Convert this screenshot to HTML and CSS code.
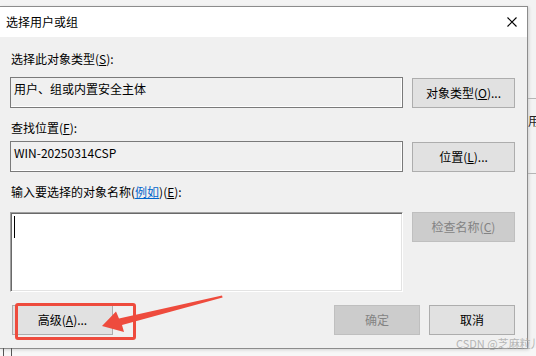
FILE: index.html
```html
<!DOCTYPE html>
<html>
<head>
  <meta charset="utf-8">
  <title>选择用户或组</title>
  <link rel="stylesheet" href="styles.css">
</head>
<body>
  <div class="desk">
    <div class="dialog">
      <div class="titlebar">
        <span class="title">选择用户或组</span>
        <svg class="close" width="10" height="10" viewBox="0 0 10 10">
          <path d="M0.5 0.5 L9.5 9.5 M9.5 0.5 L0.5 9.5" stroke="#000" stroke-width="1.1" fill="none"/>
        </svg>
      </div>
      <div class="content">
        <div class="lbl lbl1">选择此对象类型(<u>S</u>):</div>
        <div class="row row1">
          <div class="field">用户、组或内置安全主体</div>
          <button class="btn">对象类型(<u>O</u>)...</button>
        </div>
        <div class="lbl lbl2">查找位置(<u>F</u>):</div>
        <div class="row row2">
          <div class="field">WIN-20250314CSP</div>
          <button class="btn">位置(<u>L</u>)...</button>
        </div>
        <div class="lbl lbl3">输入要选择的对象名称(<a class="link" href="#">例如</a>)(<u>E</u>):</div>
        <div class="row row3">
          <div class="namebox"><span class="caret"></span></div>
          <button class="btn off">检查名称(<u>C</u>)</button>
        </div>
        <div class="footer">
          <button class="btn adv">高级(<u>A</u>)...</button>
          <div class="spacer"></div>
          <button class="btn off small">确定</button>
          <button class="btn small">取消</button>
        </div>
      </div>
    </div>
    <div class="behind">
      <div class="behind-line"></div>
      <div class="behind-text">用户</div>
      <div class="behind-line low"></div>
    </div>
  </div>
  <div class="under"><span class="col a"></span><span class="col b"></span></div>

  <!-- annotation drawn over the screenshot -->
  <div class="mark"></div>
  <svg class="arrow" width="536" height="356" viewBox="0 0 536 356">
    <polygon points="102,326 116,311.5 119,318.5 222,295.5 222.6,297.6 122,325 124,332" fill="#ee4b3d"/>
  </svg>
  <div class="watermark">CSDN @芝麻粒儿</div>
</body>
</html>
```

FILE: styles.css
```css
* {
  box-sizing: border-box;
}

body {
  margin: 0;
  width: 536px;
  height: 356px;
  overflow: hidden;
  background-color: #f3f3f3;
  font-family: "Noto Sans CJK SC", "Noto Sans", sans-serif;
  font-size: 12px;
  color: #000;
  position: relative;
}

.desk {
  display: flex;
  align-items: flex-start;
  padding-top: 6px;
  height: 348px;
}

.dialog {
  width: 528px;
  flex-shrink: 0;
  border-top: 1px solid #8c8c8c;
  border-right: 1px solid #8c8c8c;
  border-bottom: 1px solid #8c8c8c;
  box-shadow: 1px 1px 3px rgba(0, 0, 0, 0.15);
}

.titlebar {
  height: 30px;
  background-color: #fff;
  display: flex;
  align-items: center;
  justify-content: space-between;
  padding-left: 6px;
  padding-right: 10px;
}

.title {
  line-height: 16px;
}

.content {
  background-color: #f0f0f0;
  padding: 14px 12px 13px 10px;
}

.lbl {
  line-height: 16px;
  height: 16px;
  padding-left: 1px;
}

.lbl2,
.lbl3 {
  margin-top: 12px;
}

.link {
  color: #0066cc;
}

.row {
  display: grid;
  grid-template-columns: 393px 103px;
  column-gap: 9px;
  align-items: center;
}

.row1 {
  margin-top: 10px;
}

.row2 {
  margin-top: 5px;
}

.row3 {
  margin-top: 12px;
  align-items: start;
}

.field {
  height: 31px;
  border: 1px solid #7a7a7a;
  box-shadow: inset -1px -1px 0 #fff;
  padding: 0 3px;
  line-height: 22px;
}

.namebox {
  height: 80px;
  background-color: #fff;
  border-top: 1px solid #a0a0a0;
  border-left: 1px solid #a0a0a0;
  border-right: 1px solid #fff;
  border-bottom: 1px solid #fff;
  box-shadow: inset 1px 1px 0 #696969, inset -1px -1px 0 #e3e3e3;
  padding: 2px 0 0 2px;
}

.caret {
  display: block;
  width: 1px;
  height: 22px;
  margin-top: 1px;
  margin-left: 1px;
  background-color: #000;
}

.btn {
  height: 30px;
  font-family: inherit;
  font-size: 12px;
  color: #000;
  background-color: #e1e1e1;
  border: 1px solid #adadad;
  padding: 0;
  line-height: 16px;
}

.btn.off {
  background-color: #cccccc;
  border-color: #bfbfbf;
  color: #838383;
}

.footer {
  display: flex;
  gap: 9px;
  margin-top: 13px;
}

.adv {
  width: 101px;
  margin-left: 2px;
}

.spacer {
  flex: 1;
}

.small {
  width: 86px;
}

.behind {
  flex: 1;
  overflow: hidden;
  padding-top: 92px;
}

.behind-line {
  height: 1px;
  background-color: #b5b5b5;
}

.behind-line.low {
  margin-top: 44px;
}

.behind-text {
  margin-top: 14px;
  margin-left: 0;
  line-height: 16px;
  white-space: nowrap;
  color: #222;
}

.under {
  height: 8px;
  background-color: #f7f7f7;
  display: flex;
}

.col {
  width: 1px;
  background-color: #555;
}

.col.a {
  margin-left: 3px;
}

.col.b {
  margin-left: 7px;
}

.mark {
  position: absolute;
  left: 15px;
  top: 303px;
  width: 121px;
  height: 37px;
  border: 3px solid #ee4b3d;
  border-radius: 3px;
}

.arrow {
  position: absolute;
  left: 0;
  top: 0;
  pointer-events: none;
}

.watermark {
  position: absolute;
  left: 456px;
  top: 336px;
  font-size: 11px;
  line-height: 14px;
  color: rgba(170, 170, 170, 0.85);
  white-space: nowrap;
}
```
